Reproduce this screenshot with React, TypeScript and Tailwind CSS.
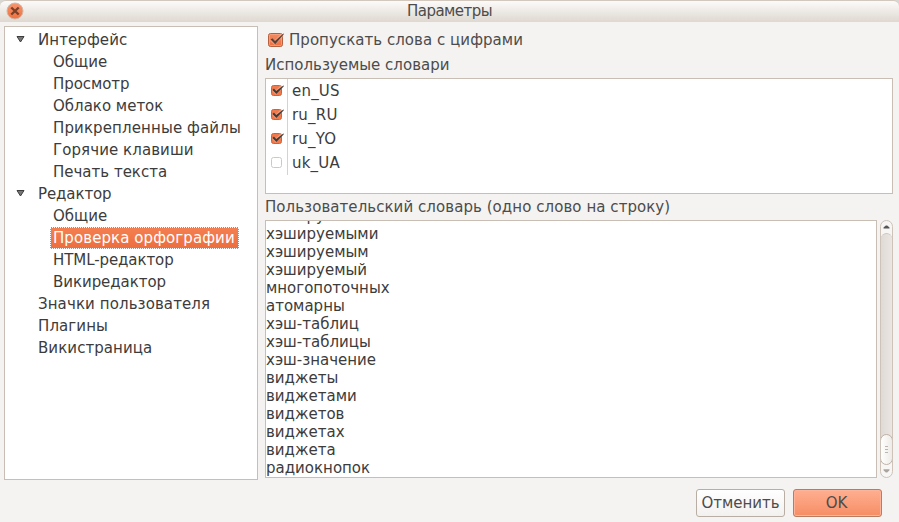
import React from "react";

type TreeItem = { label: string; kind: "root" | "leaf" | "child"; selected?: boolean; spacing?: string };

const tree: TreeItem[] = [
  { label: "Интерфейс", kind: "root", spacing: "tracking-[0.08px]" },
  { label: "Общие", kind: "child" },
  { label: "Просмотр", kind: "child", spacing: "tracking-[-0.08px]" },
  { label: "Облако меток", kind: "child" },
  { label: "Прикрепленные файлы", kind: "child", spacing: "tracking-[0.12px]" },
  { label: "Горячие клавиши", kind: "child", spacing: "tracking-[0.08px]" },
  { label: "Печать текста", kind: "child" },
  { label: "Редактор", kind: "root", spacing: "tracking-[-0.1px]" },
  { label: "Общие", kind: "child" },
  { label: "Проверка орфографии", kind: "child", selected: true, spacing: "tracking-[0.08px]" },
  { label: "HTML-редактор", kind: "child", spacing: "tracking-[-0.08px]" },
  { label: "Викиредактор", kind: "child", spacing: "tracking-[-0.05px]" },
  { label: "Значки пользователя", kind: "leaf", spacing: "tracking-[0.1px]" },
  { label: "Плагины", kind: "leaf", spacing: "tracking-[0.1px]" },
  { label: "Викистраница", kind: "leaf", spacing: "tracking-[0.07px]" },
];

const dictionaries = [
  { name: "en_US", checked: true },
  { name: "ru_RU", checked: true },
  { name: "ru_YO", checked: true },
  { name: "uk_UA", checked: false },
];

const words = [
  "хэшируемые",
  "хэшируемыми",
  "хэшируемым",
  "хэшируемый",
  "многопоточных",
  "атомарны",
  "хэш-таблиц",
  "хэш-таблицы",
  "хэш-значение",
  "виджеты",
  "виджетами",
  "виджетов",
  "виджетах",
  "виджета",
  "радиокнопок",
];

function Expander() {
  return (
    <svg width="9" height="8" viewBox="0 0 9 8" className="relative -top-px block">
      <path d="M1 1.5h7L4.5 7z" fill="#777" stroke="#3c3c3c" strokeWidth="1" />
    </svg>
  );
}

function BigCheck() {
  return (
    <svg width="17" height="16" viewBox="0 0 17 16" className="block">
      <defs>
        <linearGradient id="check" x1="0" y1="0" x2="0" y2="1">
          <stop offset="0" stopColor="#f58c63" />
          <stop offset="1" stopColor="#ee6e3e" />
        </linearGradient>
      </defs>
      <rect x=".5" y="1.5" width="14" height="13" rx="2" fill="url(#check)" stroke="#b5603f" />
      <rect x="1.5" y="2.5" width="12" height="11" rx="1" fill="none" stroke="#f9a685" strokeOpacity=".7" />
      <path d="M3 7.6L6.6 10.6 15 2.6" fill="none" stroke="#fbc3ab" strokeOpacity=".45" strokeWidth="3.4" />
      <path d="M2.6 7.6L4.4 6.2 7 8.9 15.4 1.5 16 2.1 7.2 12.3z" fill="#5a4138" />
    </svg>
  );
}

function SmallCheck({ checked }: { checked: boolean }) {
  return (
    <svg width="14" height="13" viewBox="0 0 14 13" className="relative -top-px block">
      {checked ? (
        <>
          <rect x=".5" y="1.5" width="10" height="10" rx="2" fill="#f17a4c" stroke="#d65f34" />
          <path d="M2 5.6L4.8 8.4 11.4 2.2" fill="none" stroke="#fac0a8" strokeOpacity=".5" strokeWidth="3.2" />
          <path d="M1.4 5.9L3 4.6 5.2 6.9 12.4 1.4 13 2.1 5.4 10.1z" fill="#3c3c3c" />
        </>
      ) : (
        <rect x=".5" y="1.5" width="10" height="10" rx="2" fill="#fff" stroke="#cfc8c0" />
      )}
    </svg>
  );
}

function TitleBar() {
  return (
    <header className="flex h-[22px] w-full items-center rounded-t-[6px] border-t border-[#d3c8bd] bg-linear-to-b from-[#fcfbfa] to-[#ded8d0] pl-[6px]">
      <svg width="18" height="18" viewBox="0 0 18 18" className="relative -top-px block">
        <defs>
          <linearGradient id="close" x1="0" y1="0" x2="0" y2="1">
            <stop offset="0" stopColor="#f59670" />
            <stop offset="1" stopColor="#f0703e" />
          </linearGradient>
        </defs>
        <circle cx="9" cy="9" r="8" fill="url(#close)" stroke="#cfb9ab" />
        <path d="M5.3 5.5l7.4 7M12.7 5.5l-7.4 7" stroke="#7a4128" strokeWidth="2.4" />
      </svg>
      <h1 className="relative -top-px w-[851px] text-center tracking-[-0.55px]">Параметры</h1>
    </header>
  );
}

function ScrollBar() {
  return (
    <div className="flex h-[258px] w-[13px] flex-col overflow-hidden rounded-full border border-[#cdc3b9] bg-[#f8f6f4]">
      <div className="flex h-[12px] shrink-0 items-center justify-center">
        <svg width="7" height="4" viewBox="0 0 7 4"><path d="M.5 3.6V2.6L2.8.4h1.4L6.5 2.6v1z" fill="#555" /></svg>
      </div>
      <div className="-mb-[10px] h-[211px] shrink-0 rounded-t-full border-t border-[#cdc3b9] bg-linear-to-r from-[#dfdad5] to-[#ebe6e2]" />
      <div className="-mx-px flex h-[31px] shrink-0 flex-col items-center justify-center gap-[2px] rounded-full border border-[#bcb1a6] bg-linear-to-r from-white to-[#eeebe7]">
        <i className="block h-px w-[3px] bg-[#bbb5ae]" />
        <i className="block h-px w-[3px] bg-[#bbb5ae]" />
        <i className="block h-px w-[3px] bg-[#bbb5ae]" />
      </div>
      <div className="flex h-[12px] items-center justify-center">
        <svg width="7" height="4" viewBox="0 0 7 4"><path d="M.5.2v1L2.8 3.4h1.4L6.5 1.2v-1z" fill="#aaa49e" /></svg>
      </div>
    </div>
  );
}

export default function App() {
  return (
    <div className="h-[522px] w-[899px] overflow-hidden bg-[#d9d5d0] font-['DejaVu_Sans',sans-serif] text-[15px] leading-[18px] whitespace-nowrap text-[#4c4c4c]">
      <TitleBar />
      <div className="flex h-[500px] gap-[7px] bg-[#f4f3f1] pt-1 pl-1">
        <nav className="h-[454px] w-[254px] border border-[#c8beb3] bg-white pt-[2px] text-[#3c3c3c]">
          {tree.map((item, i) => (
            <div key={i} className={`flex h-[22px] items-center ${item.spacing ?? ""}`}>
              {item.kind === "child" ? (
                <span
                  className={
                    item.selected
                      ? "ml-[45px] flex h-[22px] w-[189px] items-center border border-dotted border-[#fff] bg-linear-to-b from-[#f47f50] to-[#ec6e3f] pl-[2px] text-white"
                      : "ml-[48px]"
                  }
                >
                  {item.label}
                </span>
              ) : (
                <>
                  <span className="ml-[11px] w-[22px]">{item.kind === "root" && <Expander />}</span>
                  <span>{item.label}</span>
                </>
              )}
            </div>
          ))}
        </nav>

        <main className="flex w-[628px] flex-col">
          <label className="mt-[5px] flex h-[18px] items-center gap-[4px] pl-[3px]">
            <BigCheck />
            <span className="tracking-[0.04px]">Пропускать слова с цифрами</span>
          </label>
          <h2 className="mt-[7px] h-[22px]">Используемые словари</h2>
          <div className="h-[116px] border border-[#c8beb3] bg-white text-[#3c3c3c]">
            {dictionaries.map((d) => (
              <div key={d.name} className="flex h-6 items-center">
                <span className="flex h-6 w-[22px] items-center border-r border-[#d5d3d1] pl-[5px]">
                  <SmallCheck checked={d.checked} />
                </span>
                <span className="pl-[4px] tracking-[0.2px]">{d.name}</span>
              </div>
            ))}
          </div>
          <h2 className="mt-[4px] h-[22px] tracking-[0.06px]">Пользовательский словарь (одно слово на строку)</h2>
          <div className="flex gap-[3px]">
            <div className="flex h-[258px] w-[612px] flex-col justify-end overflow-hidden border border-[#c8beb3] bg-white text-[#3c3c3c]">
              {words.map((w) => (
                <p key={w} className="h-[18px] shrink-0">{w}</p>
              ))}
            </div>
            <ScrollBar />
          </div>
          <footer className="mt-[11px] flex gap-[8px] pl-[431px]">
            <button className="h-[28px] w-[89px] rounded-[3px] border border-[#b9aea4] bg-linear-to-b from-white to-[#f3f1ef]">Отменить</button>
            <button className="h-[28px] w-[89px] rounded-[3px] border border-[#b97b61] bg-linear-to-b from-[#ffaf91] to-[#f68d64] pr-[2px] shadow-[inset_0_0_0_1px_#ffb398]">OK</button>
          </footer>
        </main>
      </div>
    </div>
  );
}
